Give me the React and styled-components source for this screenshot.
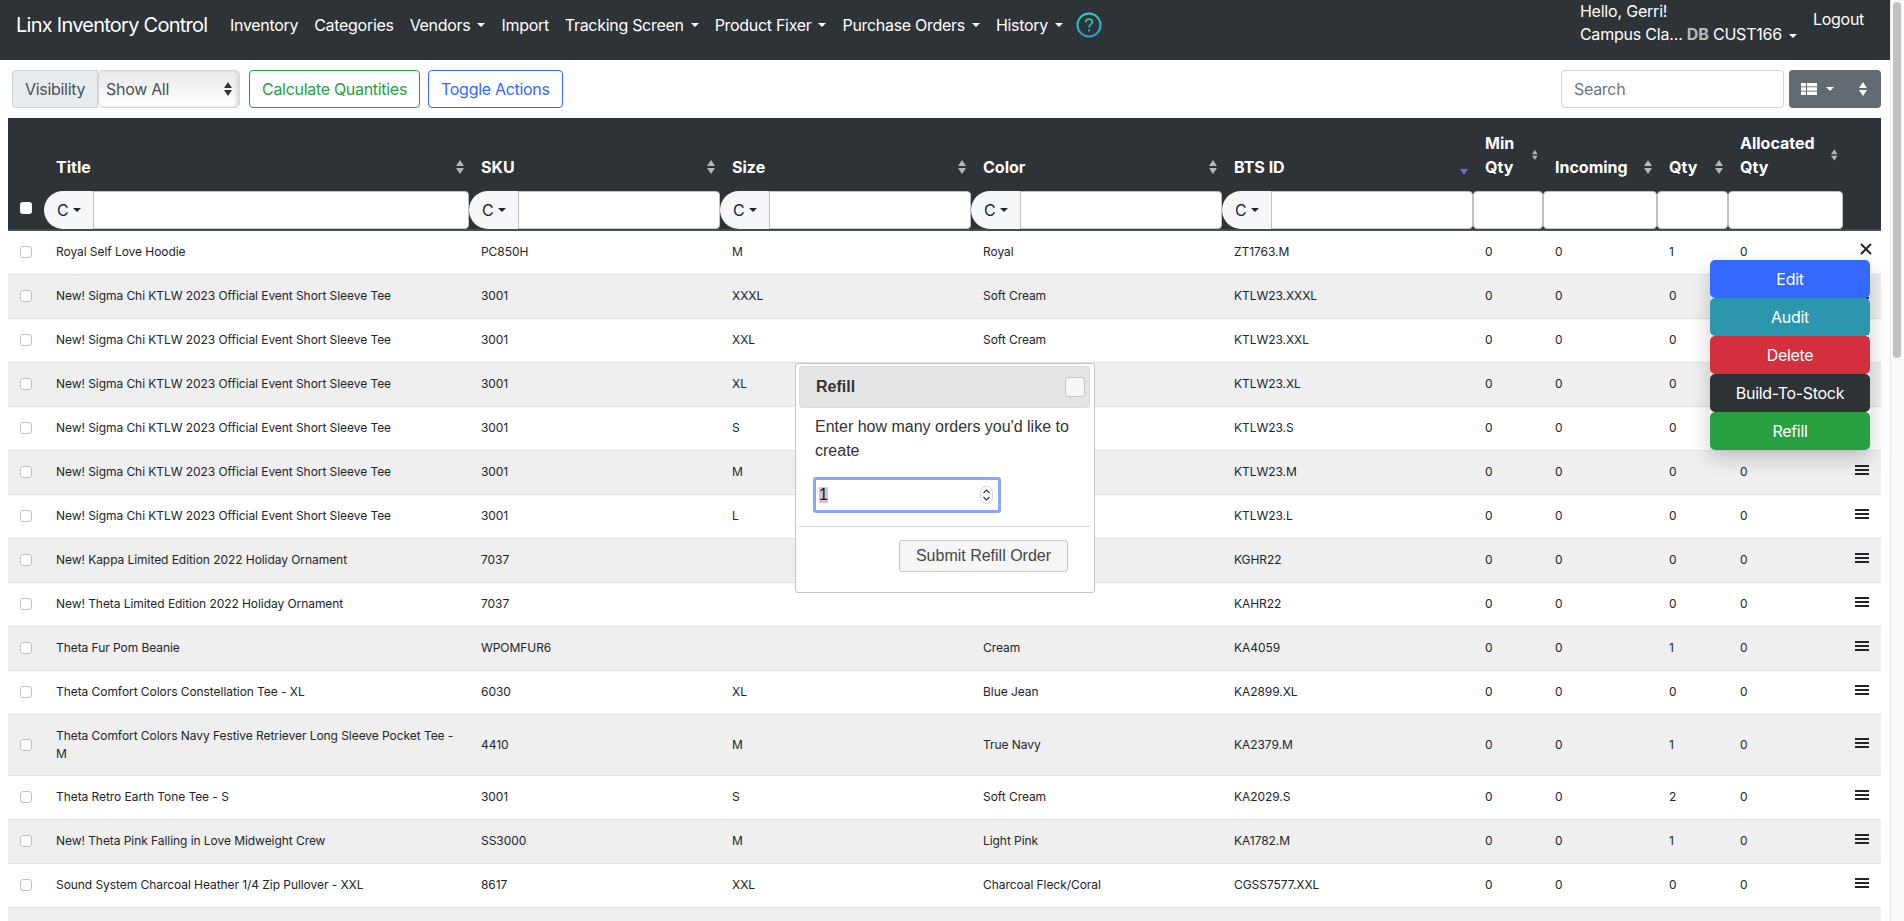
import { createGlobalStyle, styled } from "styled-components";

const SANS = `Inter, "Liberation Sans", sans-serif`;

const GlobalStyle = createGlobalStyle`
  html, body {
    margin: 0;
    height: 100%;
    overflow: hidden;
    background: #fff;
  }
  body {
    font-family: ${SANS};
    font-size: 16px;
    line-height: 24px;
    letter-spacing: -0.3px;
    color: #212529;
  }
  * {
    box-sizing: border-box;
  }
`;

const COLUMNS = [36, 425, 251, 251, 251, 251, 70, 114, 71, 115, 38];

const NAV_ITEMS = [
  { label: "Inventory" },
  { label: "Categories" },
  { label: "Vendors", menu: true },
  { label: "Import" },
  { label: "Tracking Screen", menu: true },
  { label: "Product Fixer", menu: true },
  { label: "Purchase Orders", menu: true },
  { label: "History", menu: true },
];

const HEADINGS = [
  { label: "Title", filter: true },
  { label: "SKU", filter: true },
  { label: "Size", filter: true },
  { label: "Color", filter: true },
  { label: "BTS ID", filter: true, sorted: true },
  { label: "Min Qty" },
  { label: "Incoming" },
  { label: "Qty" },
  { label: "Allocated Qty" },
];

const SIGMA = "New! Sigma Chi KTLW 2023 Official Event Short Sleeve Tee";

const ROWS = [
  ["Royal Self Love Hoodie", "PC850H", "M", "Royal", "ZT1763.M", 0, 0, 1, 0],
  [SIGMA, "3001", "XXXL", "Soft Cream", "KTLW23.XXXL", 0, 0, 0, 0],
  [SIGMA, "3001", "XXL", "Soft Cream", "KTLW23.XXL", 0, 0, 0, 0],
  [SIGMA, "3001", "XL", "Soft Cream", "KTLW23.XL", 0, 0, 0, 0],
  [SIGMA, "3001", "S", "Soft Cream", "KTLW23.S", 0, 0, 0, 0],
  [SIGMA, "3001", "M", "Soft Cream", "KTLW23.M", 0, 0, 0, 0],
  [SIGMA, "3001", "L", "Soft Cream", "KTLW23.L", 0, 0, 0, 0],
  ["New! Kappa Limited Edition 2022 Holiday Ornament", "7037", "", "", "KGHR22", 0, 0, 0, 0],
  ["New! Theta Limited Edition 2022 Holiday Ornament", "7037", "", "", "KAHR22", 0, 0, 0, 0],
  ["Theta Fur Pom Beanie", "WPOMFUR6", "", "Cream", "KA4059", 0, 0, 1, 0],
  ["Theta Comfort Colors Constellation Tee - XL", "6030", "XL", "Blue Jean", "KA2899.XL", 0, 0, 0, 0],
  ["Theta Comfort Colors Navy Festive Retriever Long Sleeve Pocket Tee - M", "4410", "M", "True Navy", "KA2379.M", 0, 0, 1, 0],
  ["Theta Retro Earth Tone Tee - S", "3001", "S", "Soft Cream", "KA2029.S", 0, 0, 2, 0],
  ["New! Theta Pink Falling in Love Midweight Crew", "SS3000", "M", "Light Pink", "KA1782.M", 0, 0, 1, 0],
  ["Sound System Charcoal Heather 1/4 Zip Pullover - XXL", "8617", "XXL", "Charcoal Fleck/Coral", "CGSS7577.XXL", 0, 0, 0, 0],
];

const ACTIONS = [
  { label: "Edit", color: "#3369ff" },
  { label: "Audit", color: "#2b96ae" },
  { label: "Delete", color: "#d32f3d" },
  { label: "Build-To-Stock", color: "#2e3338" },
  { label: "Refill", color: "#28a03f" },
];

const SortIcon = ({ onlyDown, color = "#b4b7ba" }) => (
  <svg width="8" height="14" viewBox="0 0 8 14">
    {!onlyDown && <path d="M4 0 L8 6 L0 6 Z" fill={color} />}
    <path d="M0 8 L8 8 L4 14 Z" fill={color} />
  </svg>
);

const GridIcon = () => (
  <svg width="16" height="12" viewBox="0 0 16 12" fill="#fff">
    <rect x="0" y="0" width="5" height="3.4" />
    <rect x="6" y="0" width="10" height="3.4" />
    <rect x="0" y="4.3" width="5" height="3.4" />
    <rect x="6" y="4.3" width="10" height="3.4" />
    <rect x="0" y="8.6" width="5" height="3.4" />
    <rect x="6" y="8.6" width="10" height="3.4" />
  </svg>
);

const HelpIcon = () => (
  <svg width="26" height="26" viewBox="0 0 26 26">
    <defs>
      <linearGradient id="helpRing" x1="0" y1="0" x2="0" y2="1">
        <stop offset="0" stopColor="#2bd6c0" />
        <stop offset="1" stopColor="#2b9fe0" />
      </linearGradient>
    </defs>
    <circle cx="13" cy="13" r="11.5" fill="none" stroke="url(#helpRing)" strokeWidth="2" />
    <path
      d="M9.6 10.4 C9.7 8.2 11.2 7.2 13 7.2 C14.9 7.2 16.3 8.4 16.3 10.1 C16.3 12.4 13.1 12.5 13.1 15.4"
      fill="none"
      stroke="#28bcd0"
      strokeWidth="1.8"
    />
    <circle cx="13.1" cy="18.4" r="1.1" fill="#28bcd0" />
  </svg>
);

const CloseIcon = () => (
  <svg width="12" height="12" viewBox="0 0 12 12" style={{ display: "block" }}>
    <path d="M1 1 L11 11 M11 1 L1 11" stroke="#212529" strokeWidth="1.9" />
  </svg>
);

const Spinner = () => (
  <svg width="13" height="18" viewBox="0 0 13 18">
    <rect x="0.5" y="0.5" width="12" height="17" rx="6" fill="#fff" stroke="#d5d5d5" />
    <path d="M3.5 7 L6.5 4 L9.5 7 M3.5 11 L6.5 14 L9.5 11" fill="none" stroke="#333" strokeWidth="1.2" />
  </svg>
);

const App = () => {
  return (
    <Shell>
      <GlobalStyle />
      <Main>
        <Navbar>
          <Brand>Linx Inventory Control</Brand>
          <NavList>
            {NAV_ITEMS.map((item) => (
              <NavLink key={item.label}>
                {item.label}
                {item.menu && <Caret />}
              </NavLink>
            ))}
            <HelpButton>
              <HelpIcon />
            </HelpButton>
          </NavList>
          <UserBlock>
            <UserLine>Hello, Gerri!</UserLine>
            <UserLine>
              Campus Cla... <DbTag>DB</DbTag> CUST166
              <Caret />
            </UserLine>
          </UserBlock>
          <Logout>Logout</Logout>
        </Navbar>

        <Toolbar>
          <InputGroupLabel>Visibility</InputGroupLabel>
          <SelectBox>
            Show All
            <SortIcon color="#333" />
          </SelectBox>
          <OutlineButton $color="#28a03f">Calculate Quantities</OutlineButton>
          <OutlineButton $color="#3369ff">Toggle Actions</OutlineButton>
          <ToolbarRight>
            <SearchInput placeholder="Search" />
            <ViewButton>
              <GridIcon />
              <Caret />
              <ViewSort>
                <SortIcon color="#fff" />
              </ViewSort>
            </ViewButton>
          </ToolbarRight>
        </Toolbar>

        <Table>
          <colgroup>
            {COLUMNS.map((width, index) => (
              <col key={index} width={width} />
            ))}
          </colgroup>
          <thead>
            <tr>
              <HeadCell />
              {HEADINGS.map((heading) => (
                <HeadCell key={heading.label}>
                  <HeadInner>
                    <span>{heading.label}</span>
                    {heading.sorted ? (
                      <SortedMark>
                        <SortIcon onlyDown color="#6a6ad6" />
                      </SortedMark>
                    ) : (
                      <SortIcon />
                    )}
                  </HeadInner>
                </HeadCell>
              ))}
              <HeadCell />
            </tr>
            <tr>
              <FilterCell>
                <HeadCheck type="checkbox" />
              </FilterCell>
              {HEADINGS.map((heading) => (
                <FilterCell key={heading.label}>
                  <FilterGroup>
                    {heading.filter && (
                      <FilterMode>
                        C
                        <Caret $dark />
                      </FilterMode>
                    )}
                    <FilterInput $joined={heading.filter} />
                  </FilterGroup>
                </FilterCell>
              ))}
              <FilterCell />
            </tr>
          </thead>
          <tbody>
            {ROWS.map((row, index) => (
              <BodyRow key={index}>
                <CheckCell>
                  <RowCheck />
                </CheckCell>
                {row.map((value, cellIndex) => (
                  <BodyCell key={cellIndex}>{value}</BodyCell>
                ))}
                {index === 0 ? (
                  <CloseCell>
                    <CloseIcon />
                  </CloseCell>
                ) : (
                  <IconCell>
                    <MenuIcon />
                  </IconCell>
                )}
              </BodyRow>
            ))}
            <BodyRow>
              <BodyCell colSpan={11} />
            </BodyRow>
          </tbody>
        </Table>

        <ActionMenu>
          {ACTIONS.map((action) => (
            <ActionButton key={action.label} $color={action.color}>
              {action.label}
            </ActionButton>
          ))}
        </ActionMenu>

        <Dialog>
          <DialogTitleBar>
            Refill
            <DialogClose />
          </DialogTitleBar>
          <DialogText>Enter how many orders you'd like to create</DialogText>
          <NumberField>
            <SelectedValue>1</SelectedValue>
            <Spinner />
          </NumberField>
          <DialogFooter>
            <SubmitButton>Submit Refill Order</SubmitButton>
          </DialogFooter>
        </Dialog>
      </Main>
      <ScrollTrack>
        <ScrollThumb />
      </ScrollTrack>
    </Shell>
  );
};

export default App;

const Shell = styled.div`
  display: flex;
  height: 100vh;
  overflow: hidden;
`;

const Main = styled.main`
  position: relative;
  flex: 1;
  min-width: 0;
  overflow: hidden;
`;

const ScrollTrack = styled.aside`
  width: 14px;
  padding: 2px 3px 0 2px;
  background: #fafafa;
  border-left: 1px solid #e8e8e8;
`;

const ScrollThumb = styled.div`
  height: 356px;
  background: #c1c1c1;
  border-radius: 4px;
`;

const Navbar = styled.nav`
  display: flex;
  align-items: flex-start;
  height: 60px;
  padding-left: 16px;
  background: #2e3338;
  color: #fff;
`;

const Brand = styled.div`
  width: 206px;
  margin-top: 10px;
  font-size: 20px;
  line-height: 30px;
  letter-spacing: -0.75px;
  white-space: nowrap;
`;

const NavList = styled.div`
  display: flex;
  align-items: center;
  height: 50px;
`;

const NavLink = styled.span`
  display: flex;
  align-items: center;
  padding: 0 8px;
  white-space: nowrap;
`;

const Caret = styled.i`
  display: inline-block;
  margin-left: 7px;
  vertical-align: middle;
  border-top: 4px solid ${(p) => (p.$dark ? "#212529" : "#fff")};
  border-right: 4px solid transparent;
  border-left: 4px solid transparent;
`;

const HelpButton = styled.span`
  display: flex;
  margin-left: 5px;
`;

const UserBlock = styled.div`
  margin-left: auto;
  letter-spacing: -0.2px;
`;

const UserLine = styled.div`
  height: 22px;
  line-height: 22px;
  white-space: nowrap;

  & + & {
    height: 24px;
    line-height: 24px;
  }
`;

const DbTag = styled.b`
  color: #b8babc;
  font-weight: 700;
`;

const Logout = styled.div`
  margin: 7px 26px 0 16px;
`;

const Toolbar = styled.div`
  display: flex;
  height: 38px;
  margin: 10px 9px 10px 12px;
`;

const InputGroupLabel = styled.div`
  display: flex;
  align-items: center;
  width: 86px;
  padding-left: 12px;
  background: #e9ecef;
  border: 1px solid #ced4da;
  border-radius: 4px 0 0 4px;
  color: #495057;
`;

const SelectBox = styled.div`
  display: flex;
  align-items: center;
  justify-content: space-between;
  width: 142px;
  margin-right: 1px;
  padding: 0 7px 0 7px;
  background: linear-gradient(#e9e9e9, #fff);
  border: 1px solid #ced4da;
  border-radius: 5px;
  box-shadow: inset -3px 0 3px #e0e0e0;
  color: #495057;
`;

const OutlineButton = styled.button`
  margin-left: 8px;
  padding: 0 12px;
  background: #fff;
  border: 1px solid ${(p) => p.$color};
  border-radius: 4px;
  color: ${(p) => p.$color};
  font: inherit;
  letter-spacing: inherit;
`;

const ToolbarRight = styled.div`
  display: flex;
  gap: 5px;
  margin-left: auto;
`;

const SearchInput = styled.input`
  width: 223px;
  padding: 0 12px;
  border: 1px solid #ced4da;
  border-radius: 4px;
  font: inherit;
  letter-spacing: inherit;
  color: #495057;

  &::placeholder {
    color: #6c757d;
  }
`;

const ViewButton = styled.div`
  display: flex;
  align-items: center;
  width: 92px;
  padding-left: 12px;
  background: #626a72;
  border-radius: 4px;

  ${Caret} {
    margin-left: 9px;
  }
`;

const ViewSort = styled.span`
  display: flex;
  margin-left: auto;
  margin-right: 14px;
`;

const Table = styled.table`
  width: 1873px;
  margin-left: 8px;
  border-collapse: collapse;
  table-layout: fixed;
  font-size: 12px;
  line-height: 18px;
  letter-spacing: -0.06px;
`;

const HeadCell = styled.th`
  height: 73px;
  padding: 0 12px 12px;
  background: #2e3338;
  color: #fff;
  font-size: 16px;
  line-height: 24px;
  letter-spacing: 0;
  font-weight: 700;
  text-align: left;
  vertical-align: bottom;
`;

const HeadInner = styled.div`
  display: flex;
  align-items: center;
  justify-content: space-between;
  gap: 4px;
  margin-right: -7px;
`;

const SortedMark = styled.span`
  display: flex;
  padding-top: 2px;
`;

const FilterCell = styled.td`
  height: 39px;
  padding: 0;
  background: #2e3338;
  border-bottom: 2px solid #454d55;
  vertical-align: top;
`;

const HeadCheck = styled.input`
  display: block;
  width: 12px;
  height: 12px;
  margin: 11px 0 0 12px;
  appearance: none;
  background: #fff;
  border-radius: 3px;
`;

const FilterGroup = styled.div`
  display: flex;
  height: 38px;
`;

const FilterMode = styled.div`
  display: flex;
  flex: none;
  align-items: center;
  width: 49px;
  padding-left: 13px;
  background: #f6f7f9;
  border-radius: 19px 0 0 19px;
  color: #212529;
  font-size: 16px;
  font-weight: 400;
  letter-spacing: 0;

  ${Caret} {
    margin-left: 4px;
  }
`;

const FilterInput = styled.input`
  flex: 1;
  min-width: 0;
  background: #fff;
  border: 1px solid #bcc2c9;
  border-radius: ${(p) => (p.$joined ? "0 4px 4px 0" : "4px")};
`;

const BodyRow = styled.tr`
  background: #fff;
  border-bottom: 1px solid #dee2e6;

  &:nth-child(even) {
    background: #efefef;
  }
`;

const BodyCell = styled.td`
  height: 44px;
  padding: 12px;
  vertical-align: middle;
`;

const CheckCell = styled(BodyCell)`
  padding: 0 0 0 12px;
`;

const RowCheck = styled.span`
  display: block;
  width: 12px;
  height: 12px;
  background: #fff;
  border: 1px solid #c0c0c0;
  border-radius: 3px;
`;

const IconCell = styled(BodyCell)`
  padding: 0 12px 4px;
`;

const CloseCell = styled(BodyCell)`
  padding: 0 0 6px 17px;
`;

const MenuIcon = styled.span`
  display: block;
  width: 14px;
  height: 10px;
  border-top: 2px solid #212529;
  border-bottom: 2px solid #212529;
  background: linear-gradient(#212529, #212529) center / 100% 2px no-repeat;
`;

const ActionMenu = styled.div`
  position: absolute;
  top: 260px;
  left: 1710px;
  display: flex;
  flex-direction: column;
  width: 160px;
  box-shadow: 0 8px 20px rgba(0, 0, 0, 0.2);
  border-radius: 5px;
`;

const ActionButton = styled.button`
  height: 38px;
  background: ${(p) => p.$color};
  border: 0;
  border-radius: 5px;
  color: #fff;
  font: inherit;
  letter-spacing: inherit;
`;

const Dialog = styled.div`
  position: absolute;
  top: 363px;
  left: 795px;
  width: 300px;
  height: 230px;
  padding: 2px 4px 2px 3px;
  background: #fff;
  border: 1px solid #c5c5c5;
  border-radius: 3px;
  font-family: "Liberation Sans", Arial, sans-serif;
  letter-spacing: 0;
  color: #333;
`;

const DialogTitleBar = styled.div`
  display: flex;
  align-items: center;
  justify-content: space-between;
  height: 42px;
  padding: 0 4px 0 16px;
  background: #e5e5e5;
  border: 1px solid #ddd;
  border-radius: 3px;
  font-weight: 700;
`;

const DialogClose = styled.span`
  width: 20px;
  height: 20px;
  background: #f6f6f6;
  border: 1px solid #c5c5c5;
  border-radius: 3px;
`;

const DialogText = styled.div`
  margin: 7px 16px 0;
`;

const NumberField = styled.div`
  display: flex;
  align-items: center;
  justify-content: space-between;
  width: 188px;
  height: 36px;
  margin: 14px 0 0 14px;
  padding: 0 5px 0 3px;
  background: #fff;
  border: 3px solid #8fa5f8;
  border-radius: 3px;
  color: #111;
`;

const SelectedValue = styled.span`
  display: block;
  line-height: 16px;
  background: #dcc0dc;
`;

const DialogFooter = styled.div`
  display: flex;
  justify-content: flex-end;
  margin: 13px 0 0;
  padding: 13px 22px 0 0;
  border-top: 1px solid #d3d3d3;
`;

const SubmitButton = styled.button`
  width: 169px;
  height: 32px;
  padding: 0;
  background: #f6f6f6;
  border: 1px solid #c5c5c5;
  border-radius: 3px;
  color: #454545;
  font: inherit;
`;
